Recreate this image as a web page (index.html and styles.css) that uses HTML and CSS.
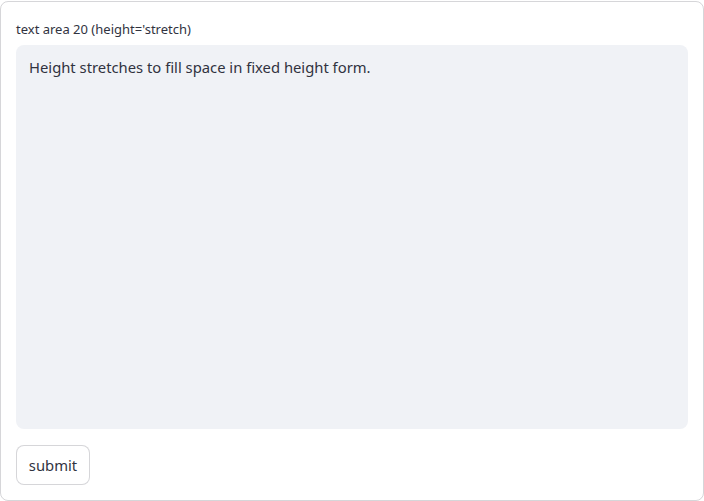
FILE: index.html
```html
<!DOCTYPE html>
<html>
<head>
<meta charset="utf-8">
<link rel="stylesheet" href="styles.css">
</head>
<body>
<form class="form">
  <div class="field">
    <label class="label">text area 20 (height='stretch)</label>
    <div class="area">Height stretches to fill space in fixed height form.</div>
  </div>
  <div class="actions">
    <button type="button" class="btn">submit</button>
  </div>
</form>
</body>
</html>
```

FILE: styles.css
```css
html, body {
  margin: 0;
  padding: 0;
  background: #ffffff;
}
body {
  padding-top: 1px;
  font-family: "Noto Sans", sans-serif;
  color: #31333f;
}
.form {
  box-sizing: border-box;
  width: 704px;
  height: 500px;
  border: 1px solid rgba(49, 51, 63, 0.2);
  border-radius: 8px;
  padding: 15px;
  display: flex;
  flex-direction: column;
  gap: 16px;
}
.field {
  flex: 1;
  display: flex;
  flex-direction: column;
}
.label {
  min-height: 24px;
  margin-bottom: 4px;
  font-size: 13px;
  line-height: 24px;
  display: flex;
  align-items: center;
}
.area {
  flex: 1;
  background: #f0f2f6;
  border-radius: 8px;
  padding: 12px 13px;
  font-size: 14.8px;
  line-height: 20px;
}
.actions {
  display: flex;
}
.btn {
  box-sizing: border-box;
  height: 40px;
  width: 74px;
  padding: 0;
  background: #ffffff;
  border: 1px solid rgba(49, 51, 63, 0.2);
  border-radius: 8px;
  font-family: "Noto Sans", sans-serif;
  font-size: 14.8px;
  color: #31333f;
}
```
